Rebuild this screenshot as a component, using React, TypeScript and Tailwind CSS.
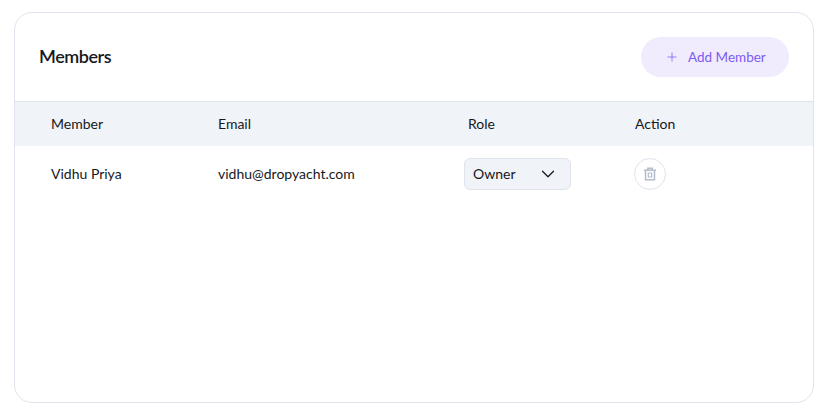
import { ChevronDown, Plus } from "lucide-react";

const font = "font-['Lato','Noto_Sans',sans-serif]";

function TrashIcon() {
  return (
    <svg width="14" height="14" viewBox="0 0 14 14" fill="none" stroke="#b4bcc9" strokeWidth="1.5">
      <path d="M1 3.2h12" />
      <path d="M4.8 3V1.2h4.4V3" />
      <path d="M2.5 3.5v9.2h9V3.5" />
      <path d="M5.3 6h3.4v4h-3.4z" strokeWidth="1.2" />
    </svg>
  );
}

export default function App() {
  return (
    <div className={`min-h-screen bg-white pt-3 pb-3.5 pl-3.5 pr-[17px] ${font}`}>
      <div className="h-[391px] overflow-hidden rounded-[18px] border border-[#dfe4ec] bg-white">
        <div className="flex h-[89px] items-center justify-between border-b border-[#dfe4ec] pl-6 pr-6">
          <h2 className="pb-0.5 text-[18px] font-semibold tracking-[-0.45px] text-[#16181d]">Members</h2>
          <button className="flex h-10 w-[148px] items-center gap-[9px] rounded-full bg-[#f0ebfd] pl-6 text-[13.5px] text-[#7c5cf2]">
            <Plus size={14} strokeWidth={1.6} className="text-[#8f73f5]" />
            Add Member
          </button>
        </div>

        <div className="grid h-11 grid-cols-[167px_250px_167px_1fr] items-center bg-[#f0f3f8] pb-0.5 pl-9 text-[14px] text-[#16181d]">
          <span>Member</span>
          <span>Email</span>
          <span>Role</span>
          <span>Action</span>
        </div>

        <div className="grid h-14 grid-cols-[167px_250px_167px_1fr] items-center pl-9 text-[14px] text-[#16181d]">
          <span className="pb-0.5">Vidhu Priya</span>
          <span className="pb-0.5">vidhu@dropyacht.com</span>
          <div className="-ml-1 flex h-8 w-[107px] items-center justify-between rounded-md border border-[#dfe4ec] bg-[#f0f3f8] pl-2 pr-[11px]">
            <span className="pb-0.5">Owner</span>
            <ChevronDown size={22} strokeWidth={1.35} />
          </div>
          <div className="-ml-px flex h-8 w-8 items-center justify-center rounded-full border border-[#dfe4ec] bg-white">
            <TrashIcon />
          </div>
        </div>
      </div>
    </div>
  );
}
